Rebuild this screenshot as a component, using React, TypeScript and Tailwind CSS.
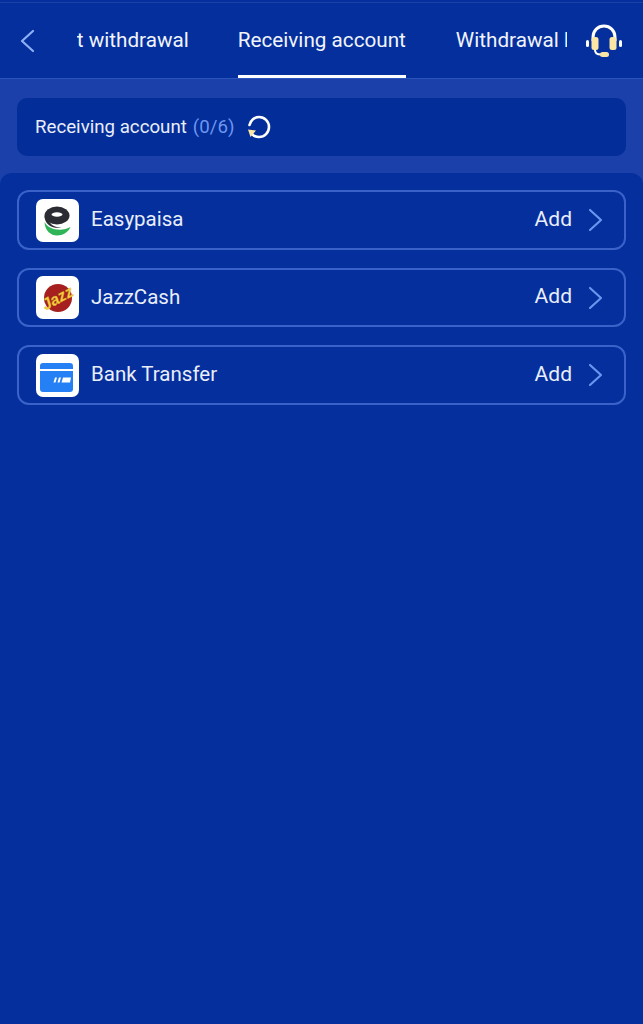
const font = { fontFamily: "Roboto, sans-serif" };

function EasypaisaLogo() {
  return (
    <svg viewBox="0 0 43 43" className="w-[43px] h-[43px]">
      <rect width="43" height="43" rx="7" fill="#fff" />
      <path d="M8.500 23C9 32 15 36.500 21 36.500c6 0 11-3 13.500-8.500-3.500 2-8.500 3-13.500 2.500-5.500-.5-10-3-12.500-7.500z" fill="#2fb457" />
      <ellipse cx="21" cy="16.500" rx="12.500" ry="9" fill="#2b2b33" />
      <path d="M8.500 17c0 5 3 9 8 11 3 1 6 1 9 .5-4 0-8-1-10-3z" fill="#2b2b33" />
      <ellipse cx="21" cy="15.500" rx="5.500" ry="2.200" fill="#fff" />
    </svg>
  );
}

function JazzLogo() {
  return (
    <svg viewBox="0 0 43 43" className="w-[43px] h-[43px]">
      <rect width="43" height="43" rx="7" fill="#fff" />
      <circle cx="22" cy="22" r="14" fill="#a5201f" />
      <text
        x="21"
        y="27.500"
        textAnchor="middle"
        fontSize="16"
        fontWeight="700"
        fontStyle="italic"
        fontFamily="'Liberation Sans', sans-serif"
        fill="#f6cf3d"
        stroke="#c9a227"
        strokeWidth="0.300"
        textLength="33"
        lengthAdjust="spacingAndGlyphs"
        transform="rotate(-28 21 21)"
      >
        Jazz
      </text>
    </svg>
  );
}

function BankLogo() {
  return (
    <svg viewBox="0 0 43 43" className="w-[43px] h-[43px]">
      <rect width="43" height="43" rx="7" fill="#fff" />
      <path d="M4 12a3 3 0 0 1 3-3h27a3 3 0 0 1 3 3v3H4z" fill="#2680f5" />
      <path d="M4 17h33v18a3 3 0 0 1-3 3H7a3 3 0 0 1-3-3z" fill="#2680f5" />
      <path d="M19 23.500h2l-1.500 5h-2zM23 23.500h2l-1.500 5h-2z" fill="#fff" />
      <path d="M27 23.500h8l-1 5h-8.500z" fill="#fff" />
    </svg>
  );
}

function HeadsetIcon() {
  return (
    <svg viewBox="0 0 38 34" className="w-[38px] h-[34px]">
      <path d="M8 17v-4C8 6.500 13 2 19 2s11 4.500 11 11v4" fill="none" stroke="#fff" strokeWidth="3" />
      <rect x="6.500" y="13" width="7" height="13" rx="2.500" fill="#fbe6a6" />
      <rect x="24.500" y="13" width="7" height="13" rx="2.500" fill="#fbe6a6" />
      <rect x="1" y="16" width="3" height="7" rx="1.500" fill="#fff" />
      <rect x="34" y="16" width="3" height="7" rx="1.500" fill="#fff" />
      <path d="M10 26c0 3 2 4.500 6 4.500" fill="none" stroke="#fff" strokeWidth="2" />
      <rect x="15" y="28" width="9" height="5" rx="2.500" fill="#fbe6a6" />
    </svg>
  );
}

function RefreshIcon() {
  return (
    <svg viewBox="0 0 26 26" className="w-[26px] h-[26px]">
      <path d="M3.500 11C4.500 6.500 8.500 3 13 3c5.500 0 10 4.500 10 10s-4.500 10-10 10c-3 0-5.500-1-7-3" fill="none" stroke="#fff" strokeWidth="2.600" strokeLinecap="round" />
      <path d="M2 15.500l8 1-5.500 6.500z" fill="#fbe6a6" />
    </svg>
  );
}

function Chevron({ dir, className }: { dir: "left" | "right"; className: string }) {
  return (
    <svg viewBox="0 0 16 24" className={className} fill="none" stroke="currentColor" strokeWidth="2.200" strokeLinecap="round" strokeLinejoin="round">
      <path d={dir === "left" ? "M14 2 3 12l11 10" : "M2 2l11 10L2 22"} />
    </svg>
  );
}

const rows = [
  { name: "Easypaisa", logo: <EasypaisaLogo />, h: "h-[60px]" },
  { name: "JazzCash", logo: <JazzLogo />, h: "h-[59px]" },
  { name: "Bank Transfer", logo: <BankLogo />, h: "h-[60px]" },
];

export default function App() {
  return (
    <div className="w-[643px] h-[1024px] overflow-hidden bg-[#1b40a9] flex flex-col" style={font}>
      {/* Header */}
      <div className="h-[79px] shrink-0 bg-[#042f9d] pt-[2px]">
        <div className="h-full border-t border-t-[#1c42a8] border-b border-b-[#2a55bd] flex items-center">
          <Chevron dir="left" className="ml-[19px] w-[16px] h-[24px] text-[#8fb0f2] shrink-0" />
          <div className="ml-[42px] w-[490px] h-full overflow-hidden">
            <div className="flex -ml-[70px] h-full w-max text-[20.700px] text-[#f1f4fb]">
              <div className="flex items-center pt-[1px] mr-[49px]">Account withdrawal</div>
              <div className="relative flex items-center pt-[1px] mr-[50px]">
                Receiving account
                <div className="absolute left-0 right-0 bottom-0 h-[3px] bg-white" />
              </div>
              <div className="flex items-center pt-[1px]">Withdrawal history</div>
            </div>
          </div>
          <div className="ml-[18px] shrink-0">
            <HeadsetIcon />
          </div>
        </div>
      </div>

      {/* Count bar */}
      <div className="h-[94px] shrink-0 px-[17px] pt-[19px]">
        <div className="h-[58px] rounded-[10px] bg-[#032d98] flex items-center pl-[18px]">
          <span className="text-[18.700px] text-[#e9eefa]">Receiving account</span>
          <span className="text-[18.700px] text-[#6d96f0] ml-[6px]">(0/6)</span>
          <span className="ml-[12px]">
            <RefreshIcon />
          </span>
        </div>
      </div>

      {/* Account list */}
      <div className="flex-1 bg-[#042f9d] rounded-t-[12px] px-[17px] pt-[17px] flex flex-col gap-[18px]">
        {rows.map((row) => (
          <div key={row.name} className={`${row.h} rounded-[12px] border-2 border-[#3a62c8] flex items-center pl-[17px] pr-[20px]`}>
            {row.logo}
            <span className="ml-[12px] pb-[1px] text-[20.500px] text-[#e9eefa]">{row.name}</span>
            <span className="ml-auto pb-[1px] text-[21px] text-[#e9eefa]">Add</span>
            <Chevron dir="right" className="ml-[16px] w-[16px] h-[24px] text-[#6b96ee]" />
          </div>
        ))}
      </div>
    </div>
  );
}
